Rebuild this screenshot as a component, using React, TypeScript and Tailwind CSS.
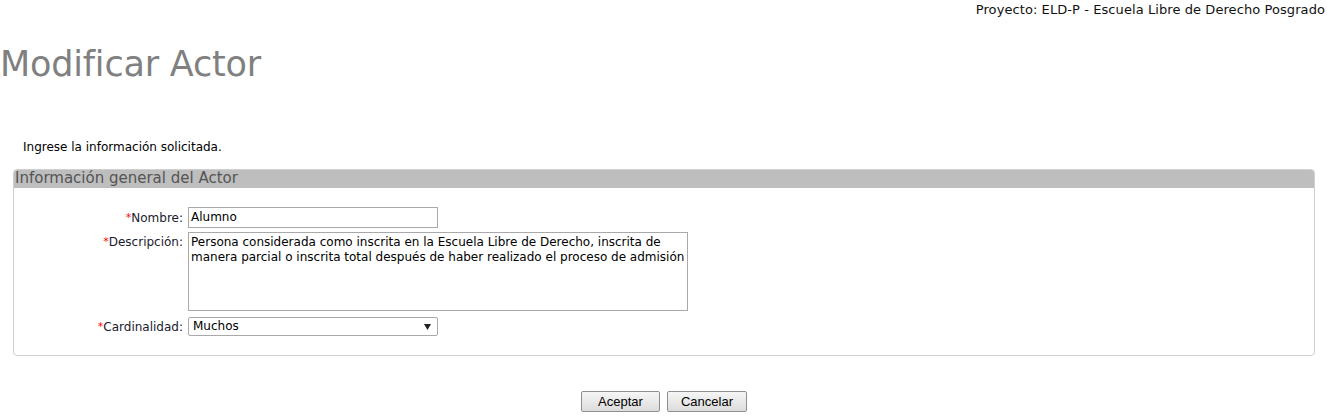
import React from "react";

function Label({ text }: { text: string }) {
  return (
    <span className="text-[12px] text-[#1a1a2e]">
      <span className="text-[#ff0000] text-[11px] align-[1px]">*</span>
      {text}
    </span>
  );
}

export default function App() {
  return (
    <div className="w-[1327px] h-[417px] bg-white relative font-['DejaVu_Sans',Verdana,sans-serif] text-black">
      <div className="flex justify-end pr-[2px] pt-[3px] h-[18px] text-[13px] leading-[14px] tracking-[0.08px] text-[#111]">
        Proyecto: ELD-P - Escuela Libre de Derecho Posgrado
      </div>
      <h1 className="mt-[24px] text-[35px] leading-[44px] text-[#808080] font-normal tracking-[-0.2px]">
        Modificar Actor
      </h1>
      <p className="mt-[54px] ml-[23px] text-[12px] leading-[15px]">Ingrese la información solicitada.</p>
      <div className="mt-[14px] ml-[13px] w-[1302px] h-[187px] border border-[#d0d0d0] rounded-[4px] overflow-hidden">
        <div className="h-[18px] bg-[#bebebe] pl-[1px] text-[15px] leading-[17px] text-[#555555]">
          Información general del Actor
        </div>
        <div className="grid grid-cols-[169px_auto] gap-x-[5px] mt-[19px]">
          <div className="flex justify-end items-center h-[21px]">
            <Label text="Nombre:" />
          </div>
          <div>
            <div className="w-[250px] h-[21px] border border-[#a9a9a9] px-[2px] text-[12px] leading-[19px]">
              Alumno
            </div>
          </div>
          <div className="flex justify-end items-start h-[79px] mt-[4px] pt-[1px]">
            <Label text="Descripción:" />
          </div>
          <div className="mt-[4px]">
            <div className="w-[500px] h-[79px] border border-[#a9a9a9] px-[2px] pt-[2px] text-[12px] leading-[15px]">
              Persona considerada como inscrita en la Escuela Libre de Derecho, inscrita de manera parcial o inscrita total después de haber realizado el proceso de admisión
            </div>
          </div>
          <div className="flex justify-end items-center h-[19px] mt-[6px]">
            <Label text="Cardinalidad:" />
          </div>
          <div className="mt-[6px]">
            <div className="w-[250px] h-[19px] border border-[#a9a9a9] rounded-[2px] pl-[4px] pr-[6px] flex items-center justify-between text-[12px] leading-[15px]">
              <span>Muchos</span>
              <svg width="7" height="6" viewBox="0 0 7 6"><path d="M0 0h7L3.5 6z" fill="#222" /></svg>
            </div>
          </div>
        </div>
      </div>
      <div className="flex justify-center gap-[7px] mt-[35px] pl-[1px] font-['Liberation_Sans',Arial,sans-serif]">
        <button className="w-[79px] h-[21px] border border-[#8f8f8f] rounded-[2px] bg-gradient-to-b from-[#f6f6f6] to-[#dcdcdc] text-[13px] leading-[19px] text-black">
          Aceptar
        </button>
        <button className="w-[80px] h-[21px] border border-[#8f8f8f] rounded-[2px] bg-gradient-to-b from-[#f6f6f6] to-[#dcdcdc] text-[13px] leading-[19px] text-black">
          Cancelar
        </button>
      </div>
    </div>
  );
}
